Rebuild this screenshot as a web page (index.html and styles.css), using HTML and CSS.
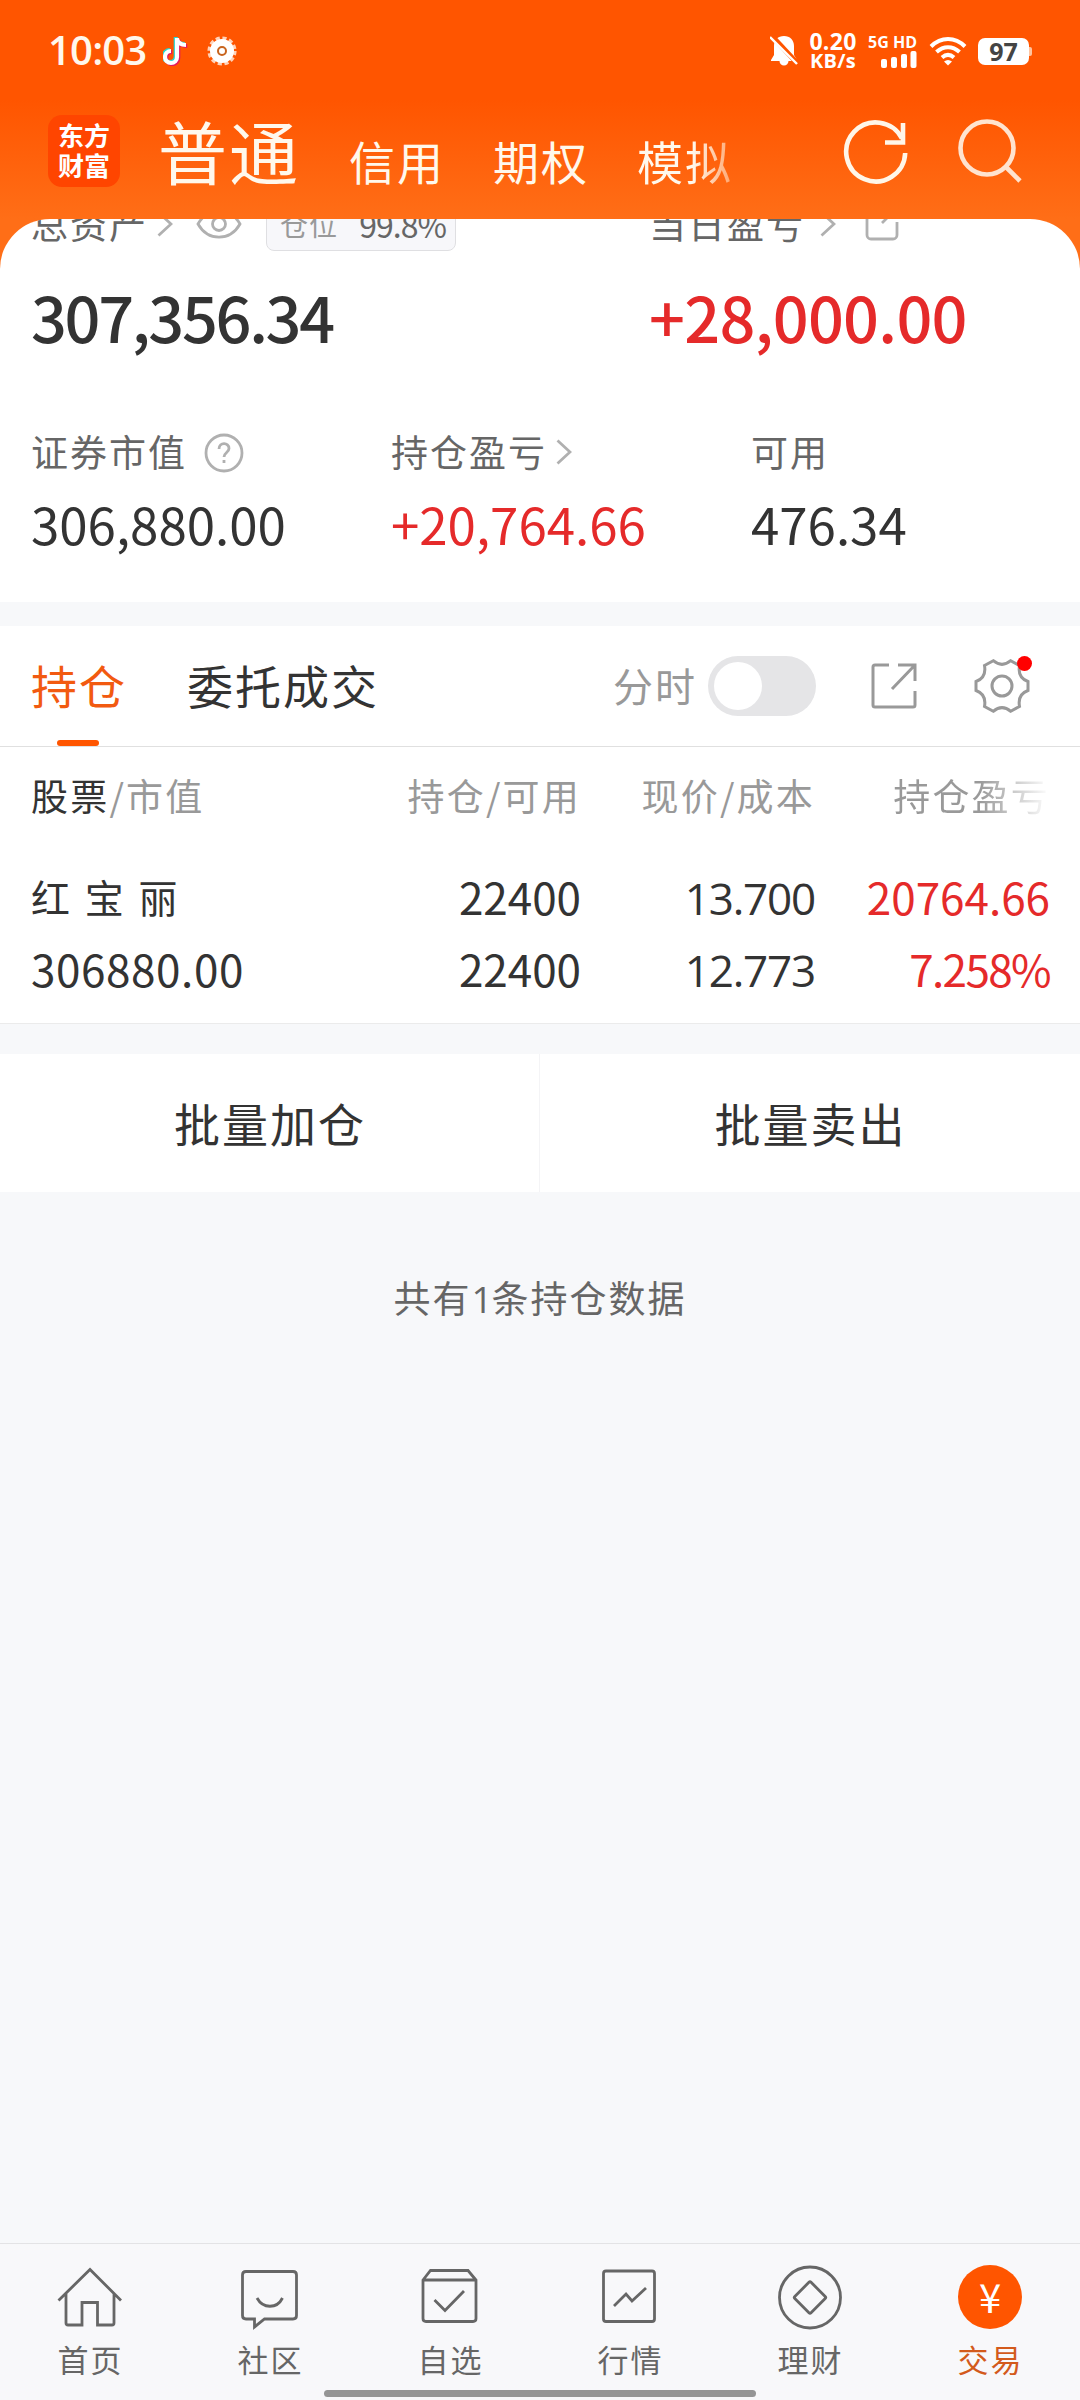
FILE: index.html
```html
<!DOCTYPE html>
<html lang="zh-CN">
<head>
    <meta charset="UTF-8">
    <meta name="viewport" content="width=device-width, initial-scale=1.0">
    <title>普通交易</title>
    <link rel="stylesheet" href="styles.css">
</head>
<body>
    <div class="header">
        <div class="status-bar">
            <span class="time">10:03</span>
            <svg class="note-icon" width="26" height="30" viewBox="0 0 26 30" fill="none" stroke-width="4.200">
                <path d="M14 2V21a6 6 0 1 1-6-6M14 3c1 4 4 6 9 6" stroke="#25d8d0" transform="translate(-1.200 -1)"/>
                <path d="M14 2V21a6 6 0 1 1-6-6M14 3c1 4 4 6 9 6" stroke="#e5195c" transform="translate(1.200 1)"/>
                <path d="M14 2V21a6 6 0 1 1-6-6M14 3c1 4 4 6 9 6" stroke="#fff"/>
            </svg>
            <svg class="flower-icon" width="30" height="30" viewBox="0 0 30 30">
                <circle cx="15" cy="15" r="12.6" fill="none" stroke="#ffd2b8" stroke-width="4" stroke-dasharray="4 2.6"/>
                <circle cx="15" cy="15" r="12" fill="#fff"/>
                <circle cx="15" cy="15" r="4" fill="none" stroke="#c8641e" stroke-width="2"/>
            </svg>
            <div class="status-right">
                <svg width="28" height="32" viewBox="0 0 28 32">
                    <path d="M14 1c6 0 10 4 10 10v9l3 5v1H18.500a4.500 4.500 0 0 1-9 0H1v-1l3-5v-9C4 5 8 1 14 1z" fill="#fff"/>
                    <path d="M2 1l26 28" stroke="#ff5500" stroke-width="5"/>
                    <path d="M0 2l27 27" stroke="#fff" stroke-width="2.400"/>
                </svg>
                <div class="speed"><span>0.20</span><span class="unit">KB/s</span></div>
                <div class="signal">
                    <span>5G HD</span>
                    <svg width="36" height="17" viewBox="0 0 36 17" fill="#fff">
                        <rect x="0" y="8" width="6" height="9" rx="2"/>
                        <rect x="10" y="6" width="6" height="11" rx="2"/>
                        <rect x="20" y="3" width="6" height="14" rx="2"/>
                        <rect x="29.500" y="0" width="6" height="17" rx="2"/>
                    </svg>
                </div>
                <svg class="wifi" width="38" height="30" viewBox="0 0 38 30" fill="none" stroke="#fff" stroke-width="4">
                    <path d="M2 10.500C12 .5 26 .5 36 10.500"/>
                    <path d="M7.500 16C14.500 9.500 23.500 9.500 30.500 16"/>
                    <path d="M13 21.500c4-3.500 8-3.500 12 0"/>
                    <path d="M15 25.500q4-3 8 0l-4 4z" fill="#fff" stroke="none"/>
                </svg>
                <div class="battery">97</div>
            </div>
        </div>
        <div class="top-nav">
            <div class="logo"><span>东方</span><span>财富</span></div>
            <div class="accounts">
                <span class="account current">普通</span>
                <span class="account">信用</span>
                <span class="account">期权</span>
                <span class="account fading">模拟</span>
            </div>
            <svg class="refresh" width="68" height="68" viewBox="0 0 68 68" fill="none" stroke="#fff6e8" stroke-width="4.600">
                <path d="M63.200 35A29.500 29.500 0 1 1 60 20.500"/>
                <path d="M61 5V24.500H43"/>
            </svg>
            <svg class="search" width="68" height="68" viewBox="0 0 68 68" fill="none" stroke="#ffe3cf" stroke-width="4.600">
                <circle cx="31" cy="30" r="26.500"/>
                <path d="M50 49l14 14"/>
            </svg>
        </div>
    </div>

    <div class="assets">
        <div class="asset-top">
            <div class="asset-title left">
                <span>总资产</span>
                <svg class="arrow" width="16" height="26" viewBox="0 0 16 26"><path d="M1.500 1.500L14 13 1.500 24.500"/></svg>
                <svg class="eye" width="46" height="30" viewBox="0 0 46 30">
                    <path d="M2 15C12-2.500 34-2.500 44 15C34 32.500 12 32.500 2 15z"/>
                    <circle cx="23" cy="15" r="6.500"/>
                </svg>
                <div class="ratio"><span>仓位</span><b>99.8%</b></div>
            </div>
            <div class="asset-title">
                <span>当日盈亏</span>
                <svg class="arrow" width="16" height="26" viewBox="0 0 16 26"><path d="M1.500 1.500L14 13 1.500 24.500"/></svg>
                <svg class="share-small" width="34" height="34" viewBox="0 0 34 34">
                    <path d="M14 2H6a4 4 0 0 0-4 4V28a4 4 0 0 0 4 4H28a4 4 0 0 0 4-4V15M17 16L31 2M22 2h10v8"/>
                </svg>
            </div>
        </div>
        <div class="total-row">
            <span class="total left">307,356.34</span>
            <span class="total profit red">+28,000.00</span>
        </div>
        <div class="details">
            <div class="detail">
                <div class="label">证券市值
                    <svg class="help" width="40" height="40" viewBox="0 0 40 40">
                        <circle cx="20" cy="20" r="18"/>
                        <path d="M15 16c0-7 10-7 10-.5 0 4-5 4-5 8.500M20 27v3"/>
                    </svg>
                </div>
                <div class="value">306,880.00</div>
            </div>
            <div class="detail">
                <div class="label">持仓盈亏
                    <svg class="arrow" width="16" height="26" viewBox="0 0 16 26"><path d="M1.500 1.500L14 13 1.500 24.500"/></svg>
                </div>
                <div class="value red">+20,764.66</div>
            </div>
            <div class="detail">
                <div class="label">可用</div>
                <div class="value">476.34</div>
            </div>
        </div>
    </div>

    <div class="holdings">
        <div class="tabs">
            <div class="tab active">持仓</div>
            <div class="tab">委托成交</div>
            <div class="tools">
                <span class="switch-label">分时</span>
                <div class="switch"><div class="knob"></div></div>
                <svg class="share" width="48" height="48" viewBox="0 0 48 48">
                    <path d="M19 3H5Q3 3 3 5V43Q3 45 5 45H43Q45 45 45 43V29M28 3H45V19M45 3L22 27"/>
                </svg>
                <div class="settings">
                    <svg width="56" height="56" viewBox="0 0 56 56">
                        <path d="M19.300 2.700Q28 10 36.700 2.700L45.500 7.500C44 16 47 21 54 23.500V32.500C47 35 44 40 45.500 48.500L36.700 53.300Q28 46 19.300 53.300L10.500 48.500C12 40 9 35 2 32.500V23.500C9 21 12 16 10.500 7.500z"/>
                        <circle cx="28" cy="28" r="10"/>
                    </svg>
                    <i class="dot"></i>
                </div>
            </div>
        </div>
        <div class="row head">
            <div class="cell"><b>股票</b>/市值</div>
            <div class="cell">持仓/可用</div>
            <div class="cell">现价/成本</div>
            <div class="cell fade">持仓盈亏</div>
        </div>
        <div class="row">
            <div class="cell name">红 宝 丽</div>
            <div class="cell">22400</div>
            <div class="cell plain">13.700</div>
            <div class="cell red">20764.66</div>
        </div>
        <div class="row">
            <div class="cell market">306880.00</div>
            <div class="cell">22400</div>
            <div class="cell plain">12.773</div>
            <div class="cell rate red">7.258%</div>
        </div>
    </div>

    <div class="batch">
        <div class="batch-button">批量加仓</div>
        <div class="batch-button">批量卖出</div>
    </div>
    <div class="summary">共有<span>1</span>条持仓数据</div>

    <div class="bottom-nav">
        <div class="nav-item">
            <svg width="72" height="72" viewBox="0 0 72 72">
                <path d="M4.500 39.500L36 8.500 67 39.500M12 32V62Q12 64 14 64H28V41.500H43.500V64H58Q60 64 60 62V32"/>
            </svg>
            <span>首页</span>
        </div>
        <div class="nav-item">
            <svg width="72" height="72" viewBox="0 0 72 72">
                <path d="M12 10.500H59Q62.500 10.500 62.500 14V54.500Q62.500 58 59 58H30.500L20.500 66V58H12Q8.500 58 8.500 54.500V14Q8.500 10.500 12 10.500zM23 37c6 11 20 11 25.500 0"/>
            </svg>
            <span>社区</span>
        </div>
        <div class="nav-item">
            <svg width="72" height="72" viewBox="0 0 72 72">
                <path d="M9 19L16.500 9.500H54L62 19V57.500Q62 60.500 59 60.500H12Q9 60.500 9 57.500zM9 19H62M20.500 39L31 49.500 50 30"/>
            </svg>
            <span>自选</span>
        </div>
        <div class="nav-item">
            <svg width="72" height="72" viewBox="0 0 72 72">
                <rect x="9.500" y="10" width="51" height="50.500" rx="2.500"/>
                <path d="M20 45L32 33l6 7L52 27"/>
            </svg>
            <span>行情</span>
        </div>
        <div class="nav-item">
            <svg width="72" height="72" viewBox="0 0 72 72">
                <circle cx="36" cy="36.500" r="30.500"/>
                <rect x="24.500" y="25" width="23" height="23" rx="1.500" transform="rotate(45 36 36.500)"/>
            </svg>
            <span>理财</span>
        </div>
        <div class="nav-item active">
            <div class="coin">¥</div>
            <span>交易</span>
        </div>
        <div class="gesture-bar"></div>
    </div>
</body>
</html>
```
FILE: styles.css
```css
* {
    box-sizing: border-box;
}
body {
    margin: 0;
    width: 1080px;
    height: 2400px;
    display: flex;
    flex-direction: column;
    overflow: hidden;
    font-family: "Noto Sans CJK SC", sans-serif;
    background-color: #f7f8fa;
    color: #333;
    letter-spacing: 2px;
}
svg {
    flex: none;
    display: block;
}
.red {
    color: #e52a2a;
}

/* header */
.header {
    height: 280px;
    flex: none;
    background: linear-gradient(#ff5500 100px, #ff6e17 219px);
    color: #fff8ec;
}
.status-bar {
    height: 102px;
    padding: 0 48px 0 48px;
    display: flex;
    align-items: center;
}
.time {
    width: 115px;
    font: 600 40px/50px "Open Sans", sans-serif;
    letter-spacing: -0.800px;
    margin-top: -2px;
}
.note-icon {
    margin-right: 18px;
}
.status-right {
    margin-left: auto;
    display: flex;
    align-items: center;
    color: #fff;
    font-family: "Open Sans", sans-serif;
    font-weight: 700;
    letter-spacing: 0;
}
.speed {
    width: 60px;
    margin-left: 5px;
    display: flex;
    flex-direction: column;
    align-items: center;
    font-size: 23px;
    line-height: 20px;
    letter-spacing: 0.300px;
}
.speed .unit {
    font-size: 20px;
}
.signal {
    width: 50px;
    margin-left: 4px;
    display: flex;
    flex-direction: column;
    align-items: flex-end;
    font-size: 16px;
    line-height: 17px;
    white-space: nowrap;
}
.wifi {
    margin-left: 12px;
}
.battery {
    position: relative;
    width: 51px;
    height: 27px;
    margin-left: 11px;
    margin-right: 3px;
    border-radius: 7px;
    background-color: #fff;
    color: #444;
    font-size: 25px;
    line-height: 27px;
    text-align: center;
}
.battery::after {
    content: "";
    position: absolute;
    right: -3px;
    top: 9px;
    width: 3px;
    height: 9px;
    background-color: #ffc4a0;
    border-radius: 0 2px 2px 0;
}
.top-nav {
    height: 100px;
    padding: 0 56px 0 48px;
    display: flex;
    align-items: center;
}
.logo {
    width: 72px;
    height: 72px;
    margin-top: -2px;
    border-radius: 14px;
    background-color: #ff4500;
    color: #fff;
    display: flex;
    flex-direction: column;
    align-items: center;
    justify-content: center;
    padding-bottom: 3px;
    font-size: 26px;
    font-weight: 700;
    line-height: 30px;
    letter-spacing: 0;
}
.accounts {
    flex: 1;
    display: flex;
    align-items: baseline;
    margin-left: 38px;
    padding-top: 5px;
}
.account {
    font-size: 46px;
    line-height: 90px;
    margin-right: 48px;
}
.account.current {
    font-size: 69px;
    margin-right: 49px;
}
.account.fading {
    margin-right: 0;
    background: linear-gradient(90deg, #fff8ec 58%, #ffa46c 100%);
    -webkit-background-clip: text;
    color: transparent;
}
.search {
    margin-left: 46px;
}

/* assets */
.assets {
    height: 383px;
    margin-top: -61px;
    flex: none;
    overflow: hidden;
    background-color: #fff;
    border-radius: 50px 50px 0 0;
    padding: 0 31px;
}
.asset-top, .total-row {
    display: flex;
}
.asset-top {
    margin-top: -25px;
    height: 60px;
}
.left {
    width: 618px;
}
.asset-title {
    display: flex;
    align-items: center;
    font-size: 37px;
    line-height: 60px;
    color: #666;
}
.asset-title > span {
    margin-top: -2px;
}
.arrow, .eye, .share-small, .help {
    fill: none;
    stroke: #b0b0b0;
    stroke-width: 2.800;
}
.asset-title .arrow {
    margin-left: 15px;
}
.asset-title.left .arrow {
    margin-left: 9px;
}
.eye {
    margin-left: 23px;
}
.share-small {
    margin-left: 29px;
}
.ratio {
    width: 190px;
    height: 54px;
    margin-left: 24px;
    padding: 0 9px 0 13px;
    border: 1px solid #dfdfe2;
    border-radius: 8px;
    background-color: #f7f7fa;
    display: flex;
    align-items: center;
    justify-content: space-between;
    font-size: 28px;
    letter-spacing: 1px;
    color: #999;
}
.ratio b {
    font-size: 32px;
    font-weight: 400;
    letter-spacing: -1px;
    color: #666;
}
.total-row {
    margin-top: 22px;
}
.total {
    font-size: 63px;
    font-weight: 500;
    line-height: 80px;
    letter-spacing: -2.300px;
}
.total.profit {
    letter-spacing: -0.700px;
}
.details {
    display: flex;
    margin-top: 71px;
}
.detail {
    flex: none;
    width: 360px;
}
.label {
    display: flex;
    align-items: center;
    height: 48px;
    font-size: 37px;
    color: #666;
}
.label .help {
    margin-left: 17px;
    margin-top: 3px;
}
.label .arrow {
    margin-left: 9px;
    margin-top: 2px;
}
.value {
    margin-top: 13px;
    font-size: 51px;
    line-height: 70px;
    letter-spacing: 0;
}

/* holdings */
.holdings {
    flex: none;
    height: 398px;
    margin-top: 24px;
    background-color: #fff;
    border-bottom: 1px solid #ebebeb;
}
.tabs {
    height: 121px;
    padding: 0 50px 0 31px;
    border-bottom: 1px solid #e0e0e0;
    display: flex;
    align-items: center;
}
.tab {
    position: relative;
    font-size: 46px;
    line-height: 117px;
    height: 120px;
    margin-right: 60px;
}
.tab.active {
    color: #f25a10;
}
.tab.active::after {
    content: "";
    position: absolute;
    left: 26px;
    bottom: 0;
    width: 42px;
    height: 6px;
    border-radius: 3px;
    background-color: #ff5500;
}
.tools {
    margin-left: auto;
    display: flex;
    align-items: center;
}
.switch-label {
    font-size: 40px;
    color: #999;
    margin-top: -2px;
    margin-right: 11px;
}
.switch {
    width: 108px;
    height: 60px;
    padding: 6px;
    border-radius: 30px;
    background-color: #e5e5e7;
}
.knob {
    width: 48px;
    height: 48px;
    border-radius: 50%;
    background-color: #fff;
}
.share, .settings svg {
    fill: none;
    stroke: #999;
    stroke-width: 3;
}
.share {
    margin-left: 54px;
}
.settings {
    position: relative;
    margin-left: 56px;
}
.dot {
    position: absolute;
    top: -2px;
    right: -2px;
    width: 15px;
    height: 15px;
    border-radius: 50%;
    background-color: #f00;
}
.row {
    display: grid;
    grid-template-columns: 300px 250px 234px 235px;
    padding: 0 30px 0 31px;
    height: 72px;
    font-size: 44px;
    line-height: 67px;
    letter-spacing: 0;
}
.row.head {
    height: 116px;
    font-size: 37px;
    line-height: 97px;
    letter-spacing: 2.200px;
    color: #999;
}
.cell {
    text-align: right;
    white-space: nowrap;
}
.cell:first-child {
    text-align: left;
}
.cell b {
    font-weight: 400;
    color: #333;
}
.cell.name {
    font-size: 39px;
    letter-spacing: 3px;
}
.cell.market {
    letter-spacing: 0.600px;
}
.cell.rate {
    letter-spacing: -1.600px;
}
.cell.plain {
    font-family: "Open Sans", sans-serif;
    line-height: 70px;
    letter-spacing: -1.200px;
}
.cell.fade {
    background: linear-gradient(90deg, #999 70%, #fff 100%);
    -webkit-background-clip: text;
    color: transparent;
}

/* batch buttons */
.batch {
    display: flex;
    flex: none;
    height: 138px;
    margin-top: 30px;
    background-color: #fff;
}
.batch-button {
    width: 540px;
    text-align: center;
    font-size: 46px;
    line-height: 136px;
    padding-left: 1px;
}
.batch-button:first-child {
    border-right: 1px solid #f4f4f6;
}
.summary {
    margin-top: 77px;
    text-align: center;
    font-size: 37px;
    line-height: 56px;
    color: #666;
}
.summary span {
    font-family: "Open Sans", sans-serif;
    letter-spacing: -1px;
}

/* bottom nav */
.bottom-nav {
    position: relative;
    display: flex;
    flex: none;
    height: 157px;
    margin-top: auto;
    padding-top: 17px;
    border-top: 1px solid #e3e3e5;
    background-color: #f8f8fa;
}
.nav-item {
    flex: 1;
    display: flex;
    flex-direction: column;
    align-items: center;
    font-size: 31px;
    line-height: 46px;
    color: #666;
}
.nav-item span {
    margin-top: 3px;
    padding-left: 1px;
}
.nav-item svg {
    fill: none;
    stroke: #666;
    stroke-width: 2.800;
}
.nav-item.active {
    color: #d35a1c;
}
.coin {
    width: 64px;
    height: 64px;
    margin: 4px;
    border-radius: 50%;
    background-color: #ff5500;
    color: #fff;
    font-size: 40px;
    line-height: 62px;
    text-align: center;
    letter-spacing: 0;
}
.gesture-bar {
    position: absolute;
    left: 324px;
    bottom: 3px;
    width: 432px;
    height: 7px;
    border-radius: 4px;
    background-color: #959595;
}
```
